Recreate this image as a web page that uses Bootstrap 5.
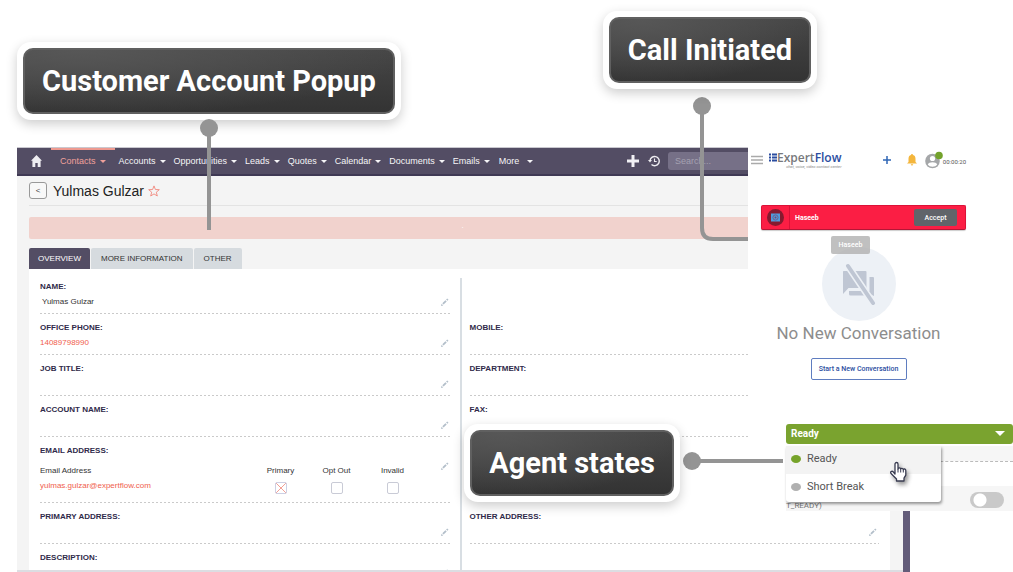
<!DOCTYPE html>
<html lang="en">
<head>
<meta charset="utf-8">
<meta name="viewport" content="width=device-width, initial-scale=1">
<title>ExpertFlow CRM integration</title>
<link href="https://cdn.jsdelivr.net/npm/bootstrap@5.3.0/dist/css/bootstrap.min.css" rel="stylesheet">
<style>
  body { font-family: "Liberation Sans", Arial, sans-serif; font-size: 8px; line-height: 12px; color: #333; background: #fff; overflow-x: hidden; }
  a { text-decoration: none; }
  svg { display: block; flex: none; }

  /* CRM window and agent console share one grid and overlap in the middle column */
  .stage { display: grid; grid-template-columns: 731fr 162fr 103fr; grid-template-rows: 364px auto; padding: 147px 0 0 17px; }
  .crm { grid-area: 1 / 1 / 3 / 3; background: #f4f4f4; border-right: 7px solid #635c79; min-width: 0; }
  .crm-body { padding: 0 13px 0 12px; border-bottom: 2px solid #dcdde2; }
  .console { grid-area: 1 / 2 / 2 / 4; background: #fff; font-family: Roboto, sans-serif; z-index: 1; }

  .crm-nav { height: 29px; background: #534d64; border-top: 1px solid #c9c8cf; border-bottom: 2px solid #3f3954; margin-right: -7px; }
  .crm-nav a { color: #f5f5f7; font-size: 9px; display: flex; align-items: center; gap: 4px; height: 26px; padding: 0 4px; white-space: nowrap; }
  .crm-nav a.active { color: #f0a09a; border-top: 2px solid #ee9a90; padding: 0 9px 2px; }
  .crm-nav a.home { padding: 0 9px 0 14px; }
  .crm-nav a.more { gap: 8px; padding-left: 5px; }
  .caret { border: 3px solid transparent; border-top-color: currentColor; border-bottom: 0; width: 0; height: 0; }
  .crm-search { height: 18px; font-size: 9px; background: #767087; border: 0; border-radius: 3px; color: #fff; padding: 0 7px; width: 218px; margin-right: 24px; }
  .crm-search::placeholder { color: #a5a1b1; }

  .back-btn { width: 18px; height: 17px; line-height: 12px; font-size: 8px; border: 1px solid #999; border-radius: 3px; background: #f8f8f8; color: #444; }
  .title-row { height: 30px; border-bottom: 1px solid #e3e3e3; }
  .record-name { font-size: 14px; line-height: 18px; color: #222; margin: 0 4px 0 6px; }
  .alert-bar { height: 22px; background: #f1d2cd; border-radius: 2px; color: #fff; margin: 11px 0 9px; font-size: 8px; line-height: 18px; padding-left: 6px; }
  .tabs-row { gap: 1px; }
  .tab-btn { height: 21px; border: 0; padding: 0 10px; font-size: 8px; background: #d6dbdf; color: #333; border-radius: 2px 2px 0 0; }
  .tab-btn.active { background: #534d64; color: #fff; padding: 0 9px; }

  .record { padding: 9px 11px 0; height: 301px; overflow: hidden; }
  .record-left { padding-right: 9px; }
  .record-right { border-left: 2px solid #d8dee3; padding-left: 8px; }
  .fieldrow { height: 41px; position: relative; padding-top: 8px; background: linear-gradient(90deg, #cacaca 0 2px, transparent 2px) left bottom / 4px 1px repeat-x; }
  .fieldrow.first { height: 36px; padding-top: 3px; }
  .fieldrow.tall { height: 66px; }
  .fieldrow.plain { background: none; }
  .field-name { font-weight: 700; color: #2f2a4a; display: block; }
  .field-val { margin-top: 3px; }
  .field-val.person { padding-left: 2px; }
  .edit-btn { position: absolute; right: 2px; bottom: 8px; border: 0; background: none; padding: 0; }
  .tall .edit-btn { bottom: 33px; }
  .red { color: #f0604d; }
  .mailtable { width: calc(100% - 30px); table-layout: fixed; margin-top: 7px; }
  .mailtable th, .mailtable td { padding: 0; font-weight: 400; height: 18px; vertical-align: middle; text-align: center; color: #333; }
  .mailtable th:first-child, .mailtable td:first-child { text-align: left; width: auto; }
  .mailtable th { width: 56px; height: 13px; }
  .mailbox { appearance: none; width: 12px; height: 12px; border: 1px solid #c9cbd6; border-radius: 2px; background: #fff; margin: 4px 0 0; display: inline-block; vertical-align: top; }
  .mailbox:checked { border-color: #cdd0e4; background: linear-gradient(45deg, transparent 46%, #f3a096 46% 54%, transparent 54%), linear-gradient(-45deg, transparent 46%, #f3a096 46% 54%, transparent 54%); }

  /* Agent console */
  .console-top { height: 58px; padding: 4px 47px 0 3px; }
  .icon-btn { border: 0; background: none; padding: 0; }
  .brand-mark { margin: 2px 0 0 6px; }
  .brand { font-family: "Open Sans", sans-serif; font-size: 12px; line-height: 13px; color: #77797c; font-weight: 600; }
  .brand span { color: #2b4da0; }
  .tagline { font-size: 4px; line-height: 5px; color: #888; font-style: italic; text-align: right; }
  .timer { font-size: 6px; color: #555; }
  .call-card { height: 25px; margin: 0 47px 0 13px; background: #fb1e44; border: 1px solid #dc1238; border-bottom-color: #b41636; border-radius: 2px; font-size: 7px; color: #fff; box-shadow: 0 1px 1px #0003; }
  .call-icon { width: 28px; border-right: 1px solid #dc1238; height: 100%; margin-right: 5px; }
  .accept-btn { width: 43px; height: 17px; font-size: 7px; line-height: 16px; padding: 0; border: 0; border-radius: 2px; background: #60646a; color: #fff; font-weight: 500; }
  .empty { margin-right: 44px; padding-top: 17px; position: relative; }
  .empty-pic { width: 74px; height: 74px; border-radius: 50%; background: #edf1f6; }
  .name-tip { position: absolute; top: 6px; left: 83px; width: 39px; height: 18px; line-height: 18px; text-align: center; background: #b0b0b0cc; border-radius: 2px; color: #fff; font-size: 7px; font-weight: 500; }
  .empty-title { font-size: 17px; line-height: 24px; color: #8d8d8d; font-weight: 400; margin: 0 0 13px; }
  .start-btn { width: 96px; height: 22px; font-size: 7px; line-height: 20px; padding: 0; border: 1px solid #5f7dc0; border-radius: 2px; background: #fff; color: #2b4da0; font-weight: 500; }

  .states { margin: 44px 0 0 38px; font-size: 10px; line-height: 14px; }
  .state-btn { height: 20px; border: 0; border-radius: 3px; background: #7aa32f; color: #fff; font-weight: 700; font-size: 10px; padding: 0 8px 1px 5px; }
  .state-btn .caret { border-width: 5px 5px 0; }
  .state-body { position: relative; height: 67px; background: linear-gradient(#fff 0 2px, #f6f6f6 2px 17px, #fff 17px 42px, #f6f6f6 42px); }
  .state-body .dash { position: absolute; top: 17px; left: 0; right: 0; border-top: 1px dashed #bbb; }
  .state-menu { position: absolute; top: 2px; left: 0; width: 155px; background: #fff; border-radius: 0 0 3px 3px; box-shadow: 1px 2px 3px #0006; margin: 0; padding: 0; list-style: none; }
  .state-menu button { border: 0; background: none; width: 100%; height: 28px; display: flex; align-items: center; gap: 6px; padding: 0 5px; color: #555; font-size: 11px; }
  .state-menu li:first-child button { background: #f3f3f3; padding-bottom: 3px; }
  .state-menu li:last-child button { padding-bottom: 2px; }
  .state-dot { width: 10px; height: 8px; border-radius: 50%; background: #b0b0b0; }
  .state-dot.on { background: #76a32a; }
  .cut-text { position: absolute; left: 0; bottom: 0; font-size: 8px; line-height: 11px; color: #777; }
  .switch-box { appearance: none; position: absolute; right: 9px; top: 48px; width: 34px; height: 16px; border-radius: 8px; background: radial-gradient(circle at 10px 8px, #fff 6px, #c9c9c9 7px); margin: 0; }
  .hand { position: absolute; left: 103px; top: 17px; filter: drop-shadow(2px 3px 2px #0006); }

  /* Callouts pinned over the screens */
  .callout { position: absolute; z-index: 3; padding: 6px; background: #fff; border-radius: 14px; box-shadow: 0 4px 12px #00000033; }
  .callout div { height: 66px; border: 2px solid #606060; border-radius: 10px; background: radial-gradient(ellipse at 15% 0, #575757, transparent 75%), linear-gradient(#464646, #333); color: #fff; font: 700 29px/62px Roboto, sans-serif; text-align: center; white-space: nowrap; }
  .callout-account { left: 17px; top: 42px; width: 384px; }
  .callout-call { left: 603px; top: 11px; width: 214px; }
  .callout-state { left: 464px; top: 424px; width: 216px; }
  .wire { position: absolute; z-index: 2; fill: none; stroke: #949494; stroke-width: 4; }
  .wire circle { fill: #949494; stroke: none; }
  .wire-account { left: 200px; top: 119px; z-index: 4; }
  .wire-call { left: 693px; top: 97px; }
  .wire-state { left: 683px; top: 452px; }
</style>
</head>
<body>
<svg width="0" height="0" class="position-absolute">
  <symbol id="pencil" viewBox="0 0 8 8"><path d="M0 8l.6-2.2 1.6 1.600zM1.300 5.300l3.100-3.100 1.300 1.300-3.100 3.100zM5.100 1.500L6.200.4 7.500 1.700 6.400 2.800z" fill="#b3bfca"/></symbol>
</svg>

<main class="stage">
  <section class="crm">
    <nav class="crm-nav d-flex">
      <a class="home" href="#" aria-label="Home"><svg width="11" height="12" viewBox="0 0 11 12"><path d="M5.500 0L11 5.800H9.600V12H6.700V8H4.300V12H1.400V5.800H0z" fill="#eeedf1"/></svg></a>
      <a class="active" href="#">Contacts<i class="caret"></i></a>
      <a href="#">Accounts<i class="caret"></i></a>
      <a href="#">Opportunities<i class="caret"></i></a>
      <a href="#">Leads<i class="caret"></i></a>
      <a href="#">Quotes<i class="caret"></i></a>
      <a href="#">Calendar<i class="caret"></i></a>
      <a href="#">Documents<i class="caret"></i></a>
      <a href="#">Emails<i class="caret"></i></a>
      <a class="more" href="#">More<i class="caret"></i></a>
      <div class="d-flex align-items-center ms-auto">
        <button class="icon-btn me-2" aria-label="Create"><svg width="14" height="12" viewBox="0 0 14 12"><path d="M7 0v12M1 6h12" stroke="#f1f0f4" stroke-width="3"/></svg></button>
        <button class="icon-btn me-2" aria-label="History"><svg width="12" height="12" viewBox="0 0 12 12" fill="none" stroke="#eeedf1"><path d="M2 6a4.600 4.600 0 1 1 1.500 3.500" stroke-width="1.400"/><path d="M0 5l2 2.400L4 5z" fill="#eeedf1" stroke="none"/><path d="M6.500 3.500v3h2.200" stroke-width="1.100"/></svg></button>
        <input class="crm-search" type="search" placeholder="Search..." aria-label="Search">
      </div>
    </nav>

    <div class="crm-body">
      <div class="title-row d-flex align-items-center">
        <button class="back-btn p-0" aria-label="Back">&lt;</button>
        <h1 class="record-name">Yulmas Gulzar</h1>
        <svg width="12" height="12" viewBox="0 0 12 12"><path d="M6 .9l1.400 3.600 3.900.2-3 2.500 1 3.800L6 8.900 2.700 11l1-3.800-3-2.500 3.900-.2z" fill="none" stroke="#f0877c" stroke-width=".9"/></svg>
      </div>
      <div class="alert-bar text-center">.</div>
      <div class="d-flex tabs-row">
        <button class="tab-btn active">OVERVIEW</button>
        <button class="tab-btn">MORE INFORMATION</button>
        <button class="tab-btn">OTHER</button>
      </div>
      <div class="record bg-white d-flex">
        <div class="record-left w-50">
          <div class="fieldrow first"><span class="field-name">NAME:</span><div class="field-val person">Yulmas Gulzar</div><button class="edit-btn" aria-label="Edit name"><svg width="8" height="8"><use href="#pencil"/></svg></button></div>
          <div class="fieldrow"><span class="field-name">OFFICE PHONE:</span><div class="field-val"><a class="red" href="#">14089798990</a></div><button class="edit-btn" aria-label="Edit phone"><svg width="8" height="8"><use href="#pencil"/></svg></button></div>
          <div class="fieldrow"><span class="field-name">JOB TITLE:</span><button class="edit-btn" aria-label="Edit job title"><svg width="8" height="8"><use href="#pencil"/></svg></button></div>
          <div class="fieldrow"><span class="field-name">ACCOUNT NAME:</span><button class="edit-btn" aria-label="Edit account"><svg width="8" height="8"><use href="#pencil"/></svg></button></div>
          <div class="fieldrow tall"><span class="field-name">EMAIL ADDRESS:</span>
            <table class="mailtable">
              <thead><tr><th>Email Address</th><th>Primary</th><th>Opt Out</th><th>Invalid</th></tr></thead>
              <tbody><tr><td><a class="red" href="#">yulmas.gulzar@expertflow.com</a></td>
                <td><input class="mailbox" type="checkbox" checked aria-label="Primary"></td>
                <td><input class="mailbox" type="checkbox" aria-label="Opt Out"></td>
                <td><input class="mailbox" type="checkbox" aria-label="Invalid"></td></tr></tbody>
            </table>
            <button class="edit-btn" aria-label="Edit email"><svg width="8" height="8"><use href="#pencil"/></svg></button></div>
          <div class="fieldrow"><span class="field-name">PRIMARY ADDRESS:</span><button class="edit-btn" aria-label="Edit address"><svg width="8" height="8"><use href="#pencil"/></svg></button></div>
          <div class="fieldrow"><span class="field-name">DESCRIPTION:</span><button class="edit-btn" aria-label="Edit description"><svg width="8" height="8"><use href="#pencil"/></svg></button></div>
        </div>
        <div class="record-right w-50">
          <div class="fieldrow first plain"></div>
          <div class="fieldrow"><span class="field-name">MOBILE:</span></div>
          <div class="fieldrow"><span class="field-name">DEPARTMENT:</span></div>
          <div class="fieldrow"><span class="field-name">FAX:</span></div>
          <div class="fieldrow tall plain"></div>
          <div class="fieldrow"><span class="field-name">OTHER ADDRESS:</span><button class="edit-btn" aria-label="Edit other address"><svg width="8" height="8"><use href="#pencil"/></svg></button></div>
        </div>
      </div>
    </div>
  </section>

  <section class="console">
    <header class="console-top d-flex align-items-start">
      <button class="icon-btn mt-1" aria-label="Menu"><svg width="12" height="10" viewBox="0 0 12 10"><path d="M0 1.500h12M0 5h12M0 8.500h12" stroke="#aaa" stroke-width="1.400"/></svg></button>
      <svg class="brand-mark" width="8" height="9" viewBox="0 0 8 9"><path d="M0 1.500h2M0 4.500h2M0 7.500h2M3 1.500h5M3 4.500h5M3 7.500h5" stroke="#2b4da0" stroke-width="2"/></svg>
      <div><div class="brand">Expert<span>Flow</span></div><div class="tagline">chat, voice, video contact center</div></div>
      <div class="d-flex align-items-center ms-auto">
        <button class="icon-btn me-3" aria-label="New"><svg width="8" height="8" viewBox="0 0 8 8"><path d="M4 0v8M0 4h8" stroke="#2f66b5" stroke-width="1.500"/></svg></button>
        <button class="icon-btn me-2" aria-label="Notifications"><svg width="10" height="12" viewBox="0 0 10 12"><path d="M5 0a1 1 0 0 1 1 1.100C7.800 1.600 8.500 3 8.500 4.800V8L10 9.600H0L1.500 8V4.800C1.500 3 2.200 1.600 4 1.100A1 1 0 0 1 5 0zM3.800 10.300h2.400a1.200 1.200 0 0 1-2.400 0z" fill="#f4b63c"/></svg></button>
        <svg width="18" height="18" viewBox="0 0 18 18"><circle cx="7.500" cy="10" r="7.300" fill="#a5a7a9"/><circle cx="7.500" cy="7.500" r="2.600" fill="#fff"/><path d="M2.800 13.500c.8-3 8.600-3 9.400 0-2 3-7.400 3-9.400 0z" fill="#fff"/><circle cx="14" cy="4.500" r="3.800" fill="#73a22c"/></svg>
        <span class="timer pt-1">00:00:20</span>
      </div>
    </header>
    <div class="call-card d-flex align-items-center pe-2">
      <div class="call-icon d-flex align-items-center justify-content-center"><svg width="17" height="17" viewBox="0 0 17 17"><circle cx="8.500" cy="8.500" r="8.500" fill="#851a2f"/><path d="M4 4.500h9v8H4z" fill="#4f9bdc"/><circle cx="8.500" cy="8.500" r="2.600" fill="none" stroke="#6a5f8e"/><circle cx="8.500" cy="8.500" r="1" fill="#824365"/></svg></div>
      <strong>Haseeb</strong>
      <button class="accept-btn ms-auto">Accept</button>
    </div>
    <div class="empty text-center">
      <div class="empty-pic mx-auto d-flex align-items-center justify-content-center">
        <svg width="36" height="42" viewBox="0 0 36 42"><g fill="#bfc6d3"><path d="M2.500 8h22q1 0 1 1v16H7.500l-5.500 6V9q0-1 .5-1zM28.500 14h3.500q1 0 1 1v18l-6-3v2.500H9.500q-1.500 0-1.500-1.500V28h20.500z"/></g><path d="M7 3l25 37" stroke="#edf1f6" stroke-width="7"/><path d="M7 3l25 37" stroke="#bfc6d3" stroke-width="4" stroke-linecap="round"/></svg>
      </div>
      <div class="name-tip">Haseeb</div>
      <h2 class="empty-title">No New Conversation</h2>
      <button class="start-btn">Start a New Conversation</button>
    </div>
    <div class="states">
      <button class="state-btn w-100 d-flex align-items-center justify-content-between" aria-expanded="true">Ready<i class="caret"></i></button>
      <div class="state-body">
        <span class="dash"></span>
        <span class="cut-text">T_READY)</span>
        <input class="switch-box" type="checkbox" role="switch" aria-label="Not ready">
        <ul class="state-menu">
          <li><button><i class="state-dot on"></i>Ready</button></li>
          <li><button><i class="state-dot"></i>Short Break</button></li>
        </ul>
        <svg class="hand" width="19" height="21" viewBox="0 0 19 21"><path d="M6 13V3c0-2 3-2 3 0v5c0-1.500 2.700-1.500 2.700.3 0-1.500 2.600-1.300 2.600.5 0-1.300 2.500-1.100 2.500.8v4.500l-1.800 3V20H7.500v-2L2 12.500c-1-1.500.8-3 2.200-1.700z" fill="#fff" stroke="#383b50" stroke-width="1.300" stroke-linejoin="round"/><path d="M9 8v3.500M11.700 8.500v3M14.300 9v2.500" stroke="#383b50"/></svg>
      </div>
    </div>
  </section>
</main>

<svg class="wire wire-account" width="18" height="111"><path d="M9 9v102"/><circle cx="9" cy="9" r="9"/></svg>
<svg class="wire wire-call" width="55" height="145"><path d="M9 9v122q0 11 11 11h35"/><circle cx="9" cy="9" r="9"/></svg>
<svg class="wire wire-state" width="100" height="18"><path d="M9 9h91"/><circle cx="9" cy="9" r="9"/></svg>
<div class="callout callout-account"><div>Customer Account Popup</div></div>
<div class="callout callout-call"><div>Call Initiated</div></div>
<div class="callout callout-state"><div>Agent states</div></div>
<script src="https://cdn.jsdelivr.net/npm/bootstrap@5.3.0/dist/js/bootstrap.bundle.min.js"></script>
</body>
</html>
